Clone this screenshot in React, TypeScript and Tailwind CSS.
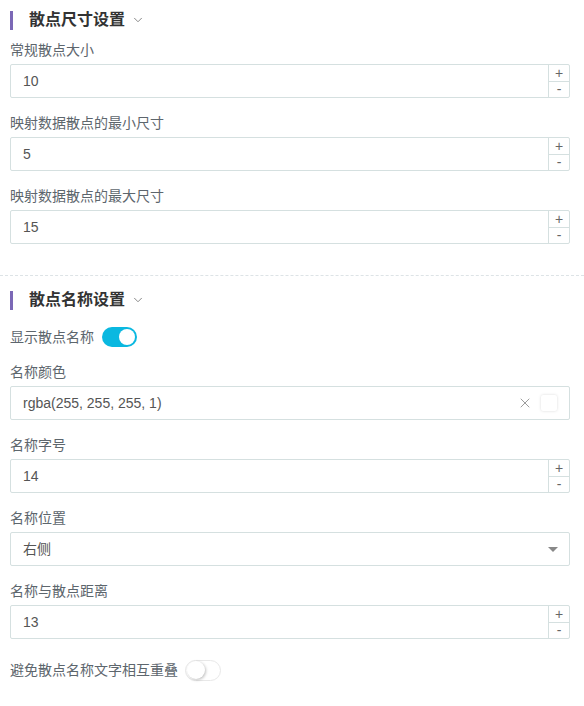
import { ChevronDown, X } from 'lucide-react';

function SectionHeader({ title, className = '' }: { title: string; className?: string }) {
    return (
        <div className={`flex items-center h-5 ${className}`}>
            <div className="w-[3px] h-[19px] bg-[#7b68b6]" />
            <span className="ml-4 text-[16px] font-bold text-[#333] leading-5">{title}</span>
            <ChevronDown className="ml-1.5 w-3.5 h-3.5 text-[#777]" strokeWidth={1.5} />
        </div>
    );
}

function Label({ children }: { children: string }) {
    return <div className="h-5 leading-5 text-[14px] text-[#5d666d]">{children}</div>;
}

function NumberField({ label, value, className = '' }: { label: string; value: string; className?: string }) {
    return (
        <div className={className}>
            <Label>{label}</Label>
            <div className="mt-1 flex h-[34px] border border-[#d5e0e0] rounded-[2px] bg-white">
                <div className="flex-1 pl-3 flex items-center text-[14px] text-[#555]">{value}</div>
                <div className="w-[21px] flex flex-col border-l border-[#d5e0e0] text-[#666] text-[14px] leading-none">
                    <div className="flex-1 flex items-center justify-center border-b border-[#d5e0e0]">+</div>
                    <div className="flex-1 flex items-center justify-center">-</div>
                </div>
            </div>
        </div>
    );
}

function Toggle({ on }: { on: boolean }) {
    if (on) {
        return (
            <div className="w-[35px] h-5 rounded-full bg-[#0ab8e0] flex items-center justify-end pr-[2px]">
                <div className="w-4 h-4 rounded-full bg-white" />
            </div>
        );
    }
    return (
        <div className="w-[36px] h-[21px] rounded-full bg-white border border-[#e8e8e8] flex items-center pl-[1px]">
            <div className="w-[18px] h-[18px] rounded-full bg-white shadow-[1px_1px_3px_rgba(0,0,0,0.25)]" />
        </div>
    );
}

export default function App() {
    return (
        <div
            className="w-[584px] h-[706px] bg-white overflow-hidden"
            style={{ fontFamily: '"Liberation Sans", "Noto Sans CJK SC", sans-serif' }}
        >
            <div className="pl-[10px] pr-[14px] pt-[10px] pb-[31px]">
                <SectionHeader title="散点尺寸设置" />
                <NumberField className="mt-2.5" label="常规散点大小" value="10" />
                <NumberField className="mt-[15px]" label="映射数据散点的最小尺寸" value="5" />
                <NumberField className="mt-[15px]" label="映射数据散点的最大尺寸" value="15" />
            </div>
            <div className="border-t border-dashed border-[#dde3e6]" />
            <div className="pl-[10px] pr-[14px] pt-[14px]">
                <SectionHeader title="散点名称设置" />
                <div className="mt-[17px] flex items-center h-5 gap-2">
                    <span className="text-[14px] text-[#5d666d]">显示散点名称</span>
                    <Toggle on />
                </div>
                <div className="mt-[15px]">
                    <Label>名称颜色</Label>
                    <div className="mt-1 flex items-center h-[34px] border border-[#d5e0e0] rounded-[2px] pl-3 pr-3">
                        <span className="flex-1 text-[14px] text-[#555]">rgba(255, 255, 255, 1)</span>
                        <X className="w-4 h-4 text-[#888]" strokeWidth={1.25} />
                        <div className="ml-2 w-4 h-4 bg-white rounded-[2px] shadow-[0_0_3px_rgba(0,0,0,0.15)]" />
                    </div>
                </div>
                <NumberField className="mt-[15px]" label="名称字号" value="14" />
                <div className="mt-[15px]">
                    <Label>名称位置</Label>
                    <div className="mt-1 flex items-center h-[34px] border border-[#d5e0e0] rounded-[2px] pl-3 pr-[11px]">
                        <span className="flex-1 text-[14px] text-[#555]">右侧</span>
                        <div className="w-0 h-0 border-l-[5px] border-r-[5px] border-t-[5px] border-l-transparent border-r-transparent border-t-[#888]" />
                    </div>
                </div>
                <NumberField className="mt-[15px]" label="名称与散点距离" value="13" />
                <div className="mt-5 flex items-center h-[22px] gap-[7px]">
                    <span className="text-[14px] text-[#5d666d]">避免散点名称文字相互重叠</span>
                    <Toggle on={false} />
                </div>
            </div>
        </div>
    );
}
